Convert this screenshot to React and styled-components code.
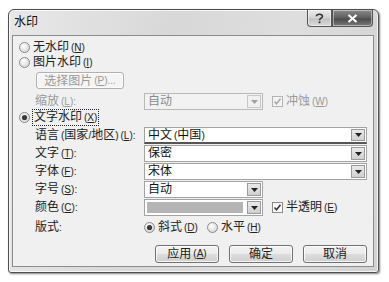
import React from 'react';
import styled, { createGlobalStyle } from 'styled-components';

const Global = createGlobalStyle`
  html, body { margin: 0; padding: 0; background: #fff; }
  body {
    font-family: "Liberation Sans", "Noto Sans CJK SC", sans-serif;
    font-size: 12px;
    color: #222;
  }
  u { text-decoration: underline; text-underline-offset: 1px; }
`;

const Page = styled.div`
  width: 389px;
  height: 282px;
  padding: 9px 0 0 8px;
  box-sizing: border-box;
`;

const Window = styled.div`
  width: 371px;
  height: 264px;
  box-sizing: border-box;
  border: 1px solid #4e4e4e;
  border-radius: 6px 6px 3px 3px;
  background: linear-gradient(100deg, #e8e8e8 0%, #d8d8d8 40%, #dedede 70%, #d2d2d2 100%);
  box-shadow: 1px 1px 2px rgba(0, 0, 0, 0.5), inset 0 0 0 1px rgba(255, 255, 255, 0.75);
  display: flex;
  flex-direction: column;
`;

const TitleBar = styled.div`
  height: 25px;
  display: flex;
  align-items: flex-start;
  justify-content: space-between;
  padding: 0 5px 0 5px;
`;

const Title = styled.div`
  padding-top: 5px;
  line-height: 14px;
  color: #111;
`;

const Caption = styled.div`
  display: flex;
`;

const CapBtn = styled.div`
  width: ${p => p.$w}px;
  height: 17px;
  box-sizing: border-box;
  display: flex;
  align-items: center;
  justify-content: center;
  border: 1px solid #555;
  border-top: none;
  border-radius: ${p => p.$r};
  background: ${p => p.$dark
    ? 'linear-gradient(#8a8a8a, #5e5e5e 50%, #4a4a4a 55%, #7a7a7a)'
    : 'linear-gradient(#ececec, #d2d2d2 50%, #c2c2c2 55%, #dadada)'};
  box-shadow: inset 0 0 0 1px rgba(255, 255, 255, 0.45);
`;

const Client = styled.div`
  flex: 1;
  margin: 0 4px 5px 3px;
  border: 1px solid #8c8c8c;
  background: #f0f0f0;
  display: flex;
  flex-direction: column;
  padding-top: 4px;
`;

const Row = styled.div`
  display: flex;
  align-items: center;
  height: ${p => p.$h || 17}px;
  margin-top: ${p => p.$mt || 0}px;
  padding-left: ${p => p.$pl ?? 22}px;
`;

const Label = styled.div`
  width: 109px;
  line-height: 14px;
  white-space: nowrap;
  color: ${p => (p.$disabled ? '#9a9a9a' : '#222')};
`;

const Mn = styled.span`
  font-size: 10px;
  margin-left: ${p => p.$ml ?? 0}px;
`;

const Option = styled.label`
  display: flex;
  align-items: center;
  gap: 3px;
  line-height: 14px;
  white-space: nowrap;
  margin-right: ${p => p.$mr || 0}px;
  color: ${p => (p.$disabled ? '#9a9a9a' : '#222')};
`;

const Focus = styled.span`
  outline: 1px dotted #222;
  outline-offset: 0px;
  padding: 0 1px;
`;

const PushButton = styled.div`
  width: ${p => p.$w}px;
  height: ${p => p.$h}px;
  box-sizing: border-box;
  border: 1px solid ${p => (p.$disabled ? '#b0b0b0' : '#707070')};
  border-radius: 3px;
  background: ${p => p.$disabled
    ? '#f4f4f4'
    : 'linear-gradient(#f2f2f2, #ebebeb 50%, #dddddd 51%, #cfcfcf)'};
  box-shadow: inset 0 0 0 1px rgba(255, 255, 255, 0.8);
  display: flex;
  align-items: center;
  justify-content: center;
  line-height: 14px;
  color: ${p => (p.$disabled ? '#9a9a9a' : '#222')};
  white-space: nowrap;
`;

const Combo = styled.div`
  width: ${p => p.$w}px;
  height: 17px;
  box-sizing: border-box;
  border: 1px solid ${p => (p.$disabled ? '#b8b8b8' : '#a3a3a3')};
  border-bottom: ${p => (p.$focus ? '2px solid #555' : undefined)};
  background: ${p => (p.$disabled ? '#f2f2f2' : '#fff')};
  display: flex;
  align-items: stretch;
`;

const ComboText = styled.div`
  flex: 1;
  padding-left: 3px;
  line-height: 15px;
  color: ${p => (p.$disabled ? '#8a8a8a' : '#111')};
  white-space: nowrap;
  overflow: hidden;
`;

const Swatch = styled.div`
  flex: 1;
  margin: 2px 3px 2px 2px;
  background: #b4b4b4;
`;

const DropBtn = styled.div`
  width: 14px;
  box-sizing: border-box;
  margin: 1px;
  border: 1px solid ${p => (p.$disabled ? '#c8c8c8' : '#9a9a9a')};
  background: ${p => (p.$disabled ? '#f0f0f0' : 'linear-gradient(#eaeaea, #cfcfcf)')};
  display: flex;
  align-items: center;
  justify-content: center;
`;

const Check = styled.div`
  margin-left: 9px;
`;

const Buttons = styled.div`
  display: flex;
  justify-content: flex-end;
  gap: 10px;
  margin-top: 10px;
  padding-right: 6px;
  height: 18px;
`;

const Radio = ({ checked }) => (
  <svg width="11" height="11" viewBox="0 0 11 11">
    <defs>
      <radialGradient id="rg" cx="0.4" cy="0.35" r="0.7">
        <stop offset="0" stopColor="#ffffff" />
        <stop offset="1" stopColor="#d4d4d4" />
      </radialGradient>
    </defs>
    <circle cx="5.5" cy="5.5" r="5" fill="url(#rg)" stroke="#8a8a8a" />
    {checked && <circle cx="5.5" cy="5.5" r="2.6" fill="#3a3a3a" />}
  </svg>
);

const CheckBox = ({ disabled }) => (
  <svg width="11" height="11" viewBox="0 0 11 11">
    <rect x="0.5" y="0.5" width="10" height="10" fill={disabled ? '#f4f4f4' : '#fafafa'} stroke={disabled ? '#b4b4b4' : '#8a8a8a'} />
    <path d="M2.5 5.5 L4.5 7.8 L8.5 2.8" fill="none" stroke={disabled ? '#a8a8a8' : '#333'} strokeWidth="1.5" />
  </svg>
);

const Arrow = ({ disabled }) => (
  <svg width="7" height="4" viewBox="0 0 7 4">
    <path d="M0 0 H7 L3.5 4 Z" fill={disabled ? '#a0a0a0' : '#222'} />
  </svg>
);

const DropCombo = ({ w, text, disabled, focus, swatch }) => (
  <Combo $w={w} $disabled={disabled} $focus={focus}>
    {swatch ? <Swatch /> : <ComboText $disabled={disabled}>{text}</ComboText>}
    <DropBtn $disabled={disabled}><Arrow disabled={disabled} /></DropBtn>
  </Combo>
);

const K = ({ k, tail = '' }) => (
  <Mn $ml={2}>(<u>{k}</u>){tail}</Mn>
);

export default function App() {
  return (
    <Page>
      <Global />
      <Window>
        <TitleBar>
          <Title>水印</Title>
          <Caption>
            <CapBtn $w={25} $r="0 0 0 4px">
              <svg width="9" height="11" viewBox="0 0 9 11">
                <path d="M1.5 3.2 C1.5 0.8 7.5 0.6 7.5 3.2 C7.5 5.2 4.5 5 4.5 7.2" fill="none" stroke="#333" strokeWidth="1.6" />
                <rect x="3.6" y="8.4" width="1.8" height="1.8" fill="#333" />
              </svg>
            </CapBtn>
            <CapBtn $w={41} $r="0 0 4px 0" $dark>
              <svg width="11" height="9" viewBox="0 0 11 9">
                <path d="M1.5 1 L9.5 8 M9.5 1 L1.5 8" stroke="#fff" strokeWidth="2.2" />
              </svg>
            </CapBtn>
          </Caption>
        </TitleBar>
        <Client>
          <Row $h={14} $pl={6}>
            <Option><Radio /><span>无水印<K k="N" /></span></Option>
          </Row>
          <Row $h={14} $mt={1} $pl={6}>
            <Option><Radio /><span>图片水印<K k="I" /></span></Option>
          </Row>
          <Row $h={17} $mt={3} $pl={23}>
            <PushButton $w={88} $h={17} $disabled>选择图片<K k="P" tail="..." /></PushButton>
          </Row>
          <Row $mt={4}>
            <Label $disabled>缩放<K k="L" tail=":" /></Label>
            <DropCombo w={119} text="自动" disabled />
            <Check>
              <Option $disabled><CheckBox disabled /><span>冲蚀<K k="W" /></span></Option>
            </Check>
          </Row>
          <Row $h={14} $pl={6}>
            <Option><Radio checked /><Focus>文字水印<K k="X" /></Focus></Option>
          </Row>
          <Row $mt={3}>
            <Label>语言<Mn $ml={2}>(</Mn>国家<Mn>/</Mn>地区<Mn>)</Mn><K k="L" tail=":" /></Label>
            <DropCombo w={223} text={<>中文<Mn $ml={2}>(</Mn>中国<Mn>)</Mn></>} focus />
          </Row>
          <Row $mt={1}>
            <Label>文字<K k="T" tail=":" /></Label>
            <DropCombo w={223} text="保密" />
          </Row>
          <Row $mt={1}>
            <Label>字体<K k="F" tail=":" /></Label>
            <DropCombo w={223} text="宋体" />
          </Row>
          <Row $mt={1}>
            <Label>字号<K k="S" tail=":" /></Label>
            <DropCombo w={119} text="自动" />
          </Row>
          <Row $mt={1}>
            <Label>颜色<K k="C" tail=":" /></Label>
            <DropCombo w={119} swatch />
            <Check>
              <Option><CheckBox /><span>半透明<K k="E" /></span></Option>
            </Check>
          </Row>
          <Row $h={16} $mt={3}>
            <Label>版式<Mn>:</Mn></Label>
            <Option $mr={9}><Radio checked /><span>斜式<K k="D" /></span></Option>
            <Option><Radio /><span>水平<K k="H" /></span></Option>
          </Row>
          <Buttons>
            <PushButton $w={64} $h={18}>应用<K k="A" /></PushButton>
            <PushButton $w={64} $h={18}>确定</PushButton>
            <PushButton $w={64} $h={18}>取消</PushButton>
          </Buttons>
        </Client>
      </Window>
    </Page>
  );
}
